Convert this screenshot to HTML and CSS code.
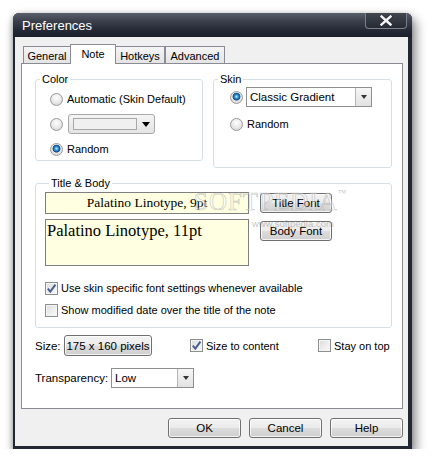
FILE: index.html
```html
<!DOCTYPE html>
<html>
<head>
<meta charset="utf-8">
<title>Preferences</title>
<link rel="stylesheet" href="styles.css">
</head>
<body>
<div class="window">
  <div class="titlebar">
    <span class="title">Preferences</span>
    <span class="close">
      <svg width="14" height="11" viewBox="0 0 14 11">
        <path d="M2.5 1.5 L11.5 9.5 M11.5 1.5 L2.5 9.5" stroke="#2b2f38" stroke-width="4.2" stroke-linecap="square"/>
        <path d="M2.5 1.5 L11.5 9.5 M11.5 1.5 L2.5 9.5" stroke="#f4f4f4" stroke-width="2.4" stroke-linecap="square"/>
      </svg>
    </span>
  </div>
  <div class="client">
    <div class="tabs">
      <span class="tab t-general">General</span>
      <span class="tab t-note active">Note</span>
      <span class="tab t-hotkeys">Hotkeys</span>
      <span class="tab t-advanced">Advanced</span>
    </div>
    <div class="panel">
      <div class="groups">
        <div class="group g-color">
          <span class="group-label">Color</span>
          <div class="opts opts-color">
            <div class="opt"><span class="radio"></span><span>Automatic (Skin Default)</span></div>
            <div class="opt"><span class="radio"></span>
              <span class="colorcombo"><span class="swatch"></span><span class="bigarrow"></span></span>
            </div>
            <div class="opt"><span class="radio on"></span><span>Random</span></div>
          </div>
        </div>
        <div class="group g-skin">
          <span class="group-label">Skin</span>
          <div class="opts opts-skin">
            <div class="opt"><span class="radio on"></span>
              <span class="combo skin-combo"><span class="combo-text">Classic Gradient</span><span class="combo-btn"><span class="smallarrow"></span></span></span>
            </div>
            <div class="opt"><span class="radio"></span><span>Random</span></div>
          </div>
        </div>
      </div>

      <div class="group g-titlebody">
        <span class="group-label">Title &amp; Body</span>
        <div class="fontgrid">
          <div class="fontfield title-field">Palatino Linotype, 9pt</div>
          <button class="btn grid-btn">Title Font</button>
          <div class="fontfield body-field">Palatino Linotype, 11pt</div>
          <button class="btn grid-btn body-btn">Body Font</button>
        </div>
        <div class="checks">
          <div class="opt check-row"><span class="check on"><svg width="11" height="11" viewBox="0 0 11 11"><path d="M1.8 5.6 L4.3 8.6 L9.4 1.6" fill="none" stroke="#4b5f96" stroke-width="2"/></svg></span><span>Use skin specific font settings whenever available</span></div>
          <div class="opt check-row"><span class="check"></span><span>Show modified date over the title of the note</span></div>
        </div>
        <div class="watermark">SOFTPEDIA<span class="tm">™</span></div>
        <div class="watermark-url">www.softpedia.com</div>
      </div>

      <div class="row size-row">
        <span class="lbl size-lbl">Size:</span>
        <button class="btn size-btn">175 x 160 pixels</button>
        <div class="opt check-row size-check"><span class="check on"><svg width="11" height="11" viewBox="0 0 11 11"><path d="M1.8 5.6 L4.3 8.6 L9.4 1.6" fill="none" stroke="#4b5f96" stroke-width="2"/></svg></span><span>Size to content</span></div>
        <div class="opt check-row"><span class="check"></span><span>Stay on top</span></div>
      </div>

      <div class="row transp-row">
        <span class="lbl transp-lbl">Transparency:</span>
        <span class="combo transp-combo"><span class="combo-text">Low</span><span class="combo-btn"><span class="smallarrow"></span></span></span>
      </div>
    </div>
    <div class="actions">
      <button class="btn action">OK</button>
      <button class="btn action">Cancel</button>
      <button class="btn action">Help</button>
    </div>
  </div>
</div>
</body>
</html>
```

FILE: styles.css
```css
* { box-sizing: border-box; }
html, body { margin: 0; background: #fff; }
body {
  font-family: "Liberation Sans", Arial, sans-serif;
  font-size: 11px;
  color: #000;
}

.window {
  margin: 13px 0 0 13px;
  width: 399px;
  height: 436px;
  background: #232733;
  padding: 0 4px 3px 2px;
  display: flex;
  flex-direction: column;
  border-radius: 6px 6px 0 0;
  box-shadow: 3px 6px 11px 1px rgba(0,0,0,0.45), -1px 1px 5px rgba(0,0,0,0.2);
}

.titlebar {
  height: 24px;
  margin: 0 -4px 0 -2px;
  padding-left: 9px;
  display: flex;
  justify-content: space-between;
  align-items: flex-start;
  background: linear-gradient(#5a5f6b 0%, #3a3f4b 35%, #262a36 70%, #1c202b 100%);
  border-radius: 6px 6px 0 0;
}
.title {
  color: #fff;
  font-size: 13px;
  line-height: 26px;
}
.close {
  width: 42px;
  height: 16px;
  margin-right: 5px;
  border: 1px solid #7b808c;
  border-top: none;
  border-radius: 0 0 4px 4px;
  background: linear-gradient(#41464f, #262a33);
  display: flex;
  align-items: center;
  justify-content: center;
}

.client {
  flex: 1;
  background: #f0f0f0;
  padding: 7px 5px 8px 6px;
  display: flex;
  flex-direction: column;
}

.tabs {
  display: flex;
  align-items: flex-end;
  height: 19px;
  padding-left: 2px;
}
.tab {
  height: 17px;
  border: 1px solid #898c95;
  border-bottom: none;
  background: linear-gradient(#f5f5f5, #e4e4e4);
  padding-top: 2px;
  line-height: 14px;
  text-align: center;
  margin-left: -1px;
}
.t-general { width: 48px; margin-left: 0; }
.t-note { width: 46px; }
.t-hotkeys { width: 50px; }
.t-advanced { width: 60px; margin-left: 0; }
.tab.active {
  position: relative;
  height: 20px;
  margin-bottom: -1px;
  background: #fff;
  padding-top: 1px;
  line-height: 16px;
}

.panel {
  height: 346px;
  border: 1px solid #898c95;
  background: #fff;
  padding: 15px 0 0 13px;
}

.groups {
  display: flex;
  gap: 10px;
  align-items: flex-start;
}
.group {
  border: 1px solid #d5dfe5;
  border-radius: 3px;
  background: #fff;
}
.group-label {
  display: table;
  margin: -8px 0 0 4px;
  padding: 0 2px;
  background: #fff;
  line-height: 14px;
}
.g-color { width: 168px; }
.g-skin { width: 179px; }

.opts { display: flex; flex-direction: column; }
.opts-color { gap: 3px; padding: 2px 0 0 14px; }
.opts-skin { gap: 5px; padding: 0 0 32px 16px; }
.opt {
  display: flex;
  align-items: center;
  height: 22px;
  gap: 4px;
}

.radio {
  width: 13px;
  height: 13px;
  flex: none;
  border-radius: 50%;
  border: 1px solid #9a9a9a;
  background: radial-gradient(circle at 50% 35%, #ffffff 0, #ececec 45%, #cfcfcf 100%);
}
.radio.on {
  background:
    radial-gradient(circle at 50% 42%, #b8ecff 0, #3da0e0 1.6px, #135da8 3px, #2a4f7a 3.6px, rgba(60,80,110,0) 4.3px),
    radial-gradient(circle at 50% 35%, #ffffff 0, #ececec 45%, #cfcfcf 100%);
}

.colorcombo {
  margin-left: 1px;
  width: 87px;
  height: 20px;
  border: 1px solid #a8a8a8;
  border-radius: 3px;
  background: linear-gradient(#f4f4f4, #e4e4e4);
  display: flex;
  align-items: center;
  padding-left: 4px;
}
.swatch {
  width: 64px;
  height: 12px;
  border: 1px solid #a8a8a8;
  background: #f0f0f0;
}
.bigarrow {
  margin-left: 5px;
  width: 0;
  height: 0;
  border-top: 5px solid #000;
  border-left: 4.5px solid transparent;
  border-right: 4.5px solid transparent;
}

.combo {
  height: 20px;
  border: 1px solid #8e8f8f;
  background: #fff;
  display: flex;
  align-items: stretch;
}
.combo-text {
  flex: 1;
  line-height: 18px;
  padding-left: 3px;
}
.combo-btn {
  width: 16px;
  border-left: 1px solid #b5b5b5;
  background: linear-gradient(#f6f6f6, #e2e2e2);
  display: flex;
  align-items: center;
  justify-content: center;
}
.smallarrow {
  width: 0;
  height: 0;
  border-top: 4px solid #333;
  border-left: 3.5px solid transparent;
  border-right: 3.5px solid transparent;
}
.skin-combo { width: 126px; margin-left: -1px; font-size: 11.5px; }

.g-titlebody {
  position: relative;
  width: 357px;
  margin-top: 15px;
  padding: 0 0 8px 9px;
}
.fontgrid {
  display: grid;
  grid-template-columns: 204px 72px;
  column-gap: 11px;
  row-gap: 5px;
  margin-top: 2px;
}
.fontfield {
  border: 1px solid #7f7f7f;
  background: #ffffe1;
  font-family: "Liberation Serif", "Times New Roman", serif;
}
.title-field {
  height: 22px;
  font-size: 13.5px;
  line-height: 20px;
  text-align: center;
}
.body-field {
  height: 47px;
  font-size: 16.5px;
  line-height: 22px;
  padding-left: 1px;
}
.grid-btn { align-self: center; }
.body-btn { align-self: start; margin-top: 2px; }

.btn {
  height: 20px;
  padding: 0;
  border: 1px solid #707070;
  border-radius: 3px;
  background: linear-gradient(#f3f3f3 0%, #ebebeb 48%, #dcdcdc 52%, #cfcfcf 100%);
  box-shadow: inset 0 0 0 1px rgba(255,255,255,0.75);
  font-family: "Liberation Sans", Arial, sans-serif;
  font-size: 11.5px;
  color: #000;
}

.checks {
  margin-top: 13px;
  display: flex;
  flex-direction: column;
  gap: 4px;
}
.check-row { height: 18px; gap: 3px; }
.check {
  width: 13px;
  height: 13px;
  flex: none;
  border: 1px solid #8e8f8f;
  background: linear-gradient(135deg, #dcdcdc, #fbfbfb);
  box-shadow: inset 0 0 0 1px #f4f4f4;
  display: flex;
  align-items: center;
  justify-content: center;
}

.watermark {
  position: absolute;
  left: 158px;
  top: 4px;
  font-family: "Liberation Serif", serif;
  font-size: 25px;
  letter-spacing: 1px;
  color: rgba(255,255,255,0.45);
  -webkit-text-stroke: 0.7px rgba(150,150,150,0.5);
  pointer-events: none;
}
.watermark .tm {
  font-size: 9px;
  vertical-align: top;
  -webkit-text-stroke: 0;
  color: rgba(150,150,150,0.55);
}
.watermark-url {
  position: absolute;
  left: 216px;
  top: 34px;
  font-size: 9.5px;
  color: rgba(140,140,140,0.5);
  pointer-events: none;
}

.row {
  display: flex;
  align-items: center;
}
.size-row { margin-top: 7px; height: 21px; }
.size-lbl { width: 29px; font-size: 11.5px; }
.size-btn { width: 88px; height: 21px; }
.size-check { margin-left: 38px; width: 128px; }
.transp-row { margin-top: 12px; height: 20px; }
.transp-lbl { width: 76px; font-size: 11.5px; }
.transp-combo { width: 83px; font-size: 11.5px; }

.actions {
  margin-top: 9px;
  display: flex;
  justify-content: flex-end;
  gap: 8px;
}
.action { width: 73px; }
```
